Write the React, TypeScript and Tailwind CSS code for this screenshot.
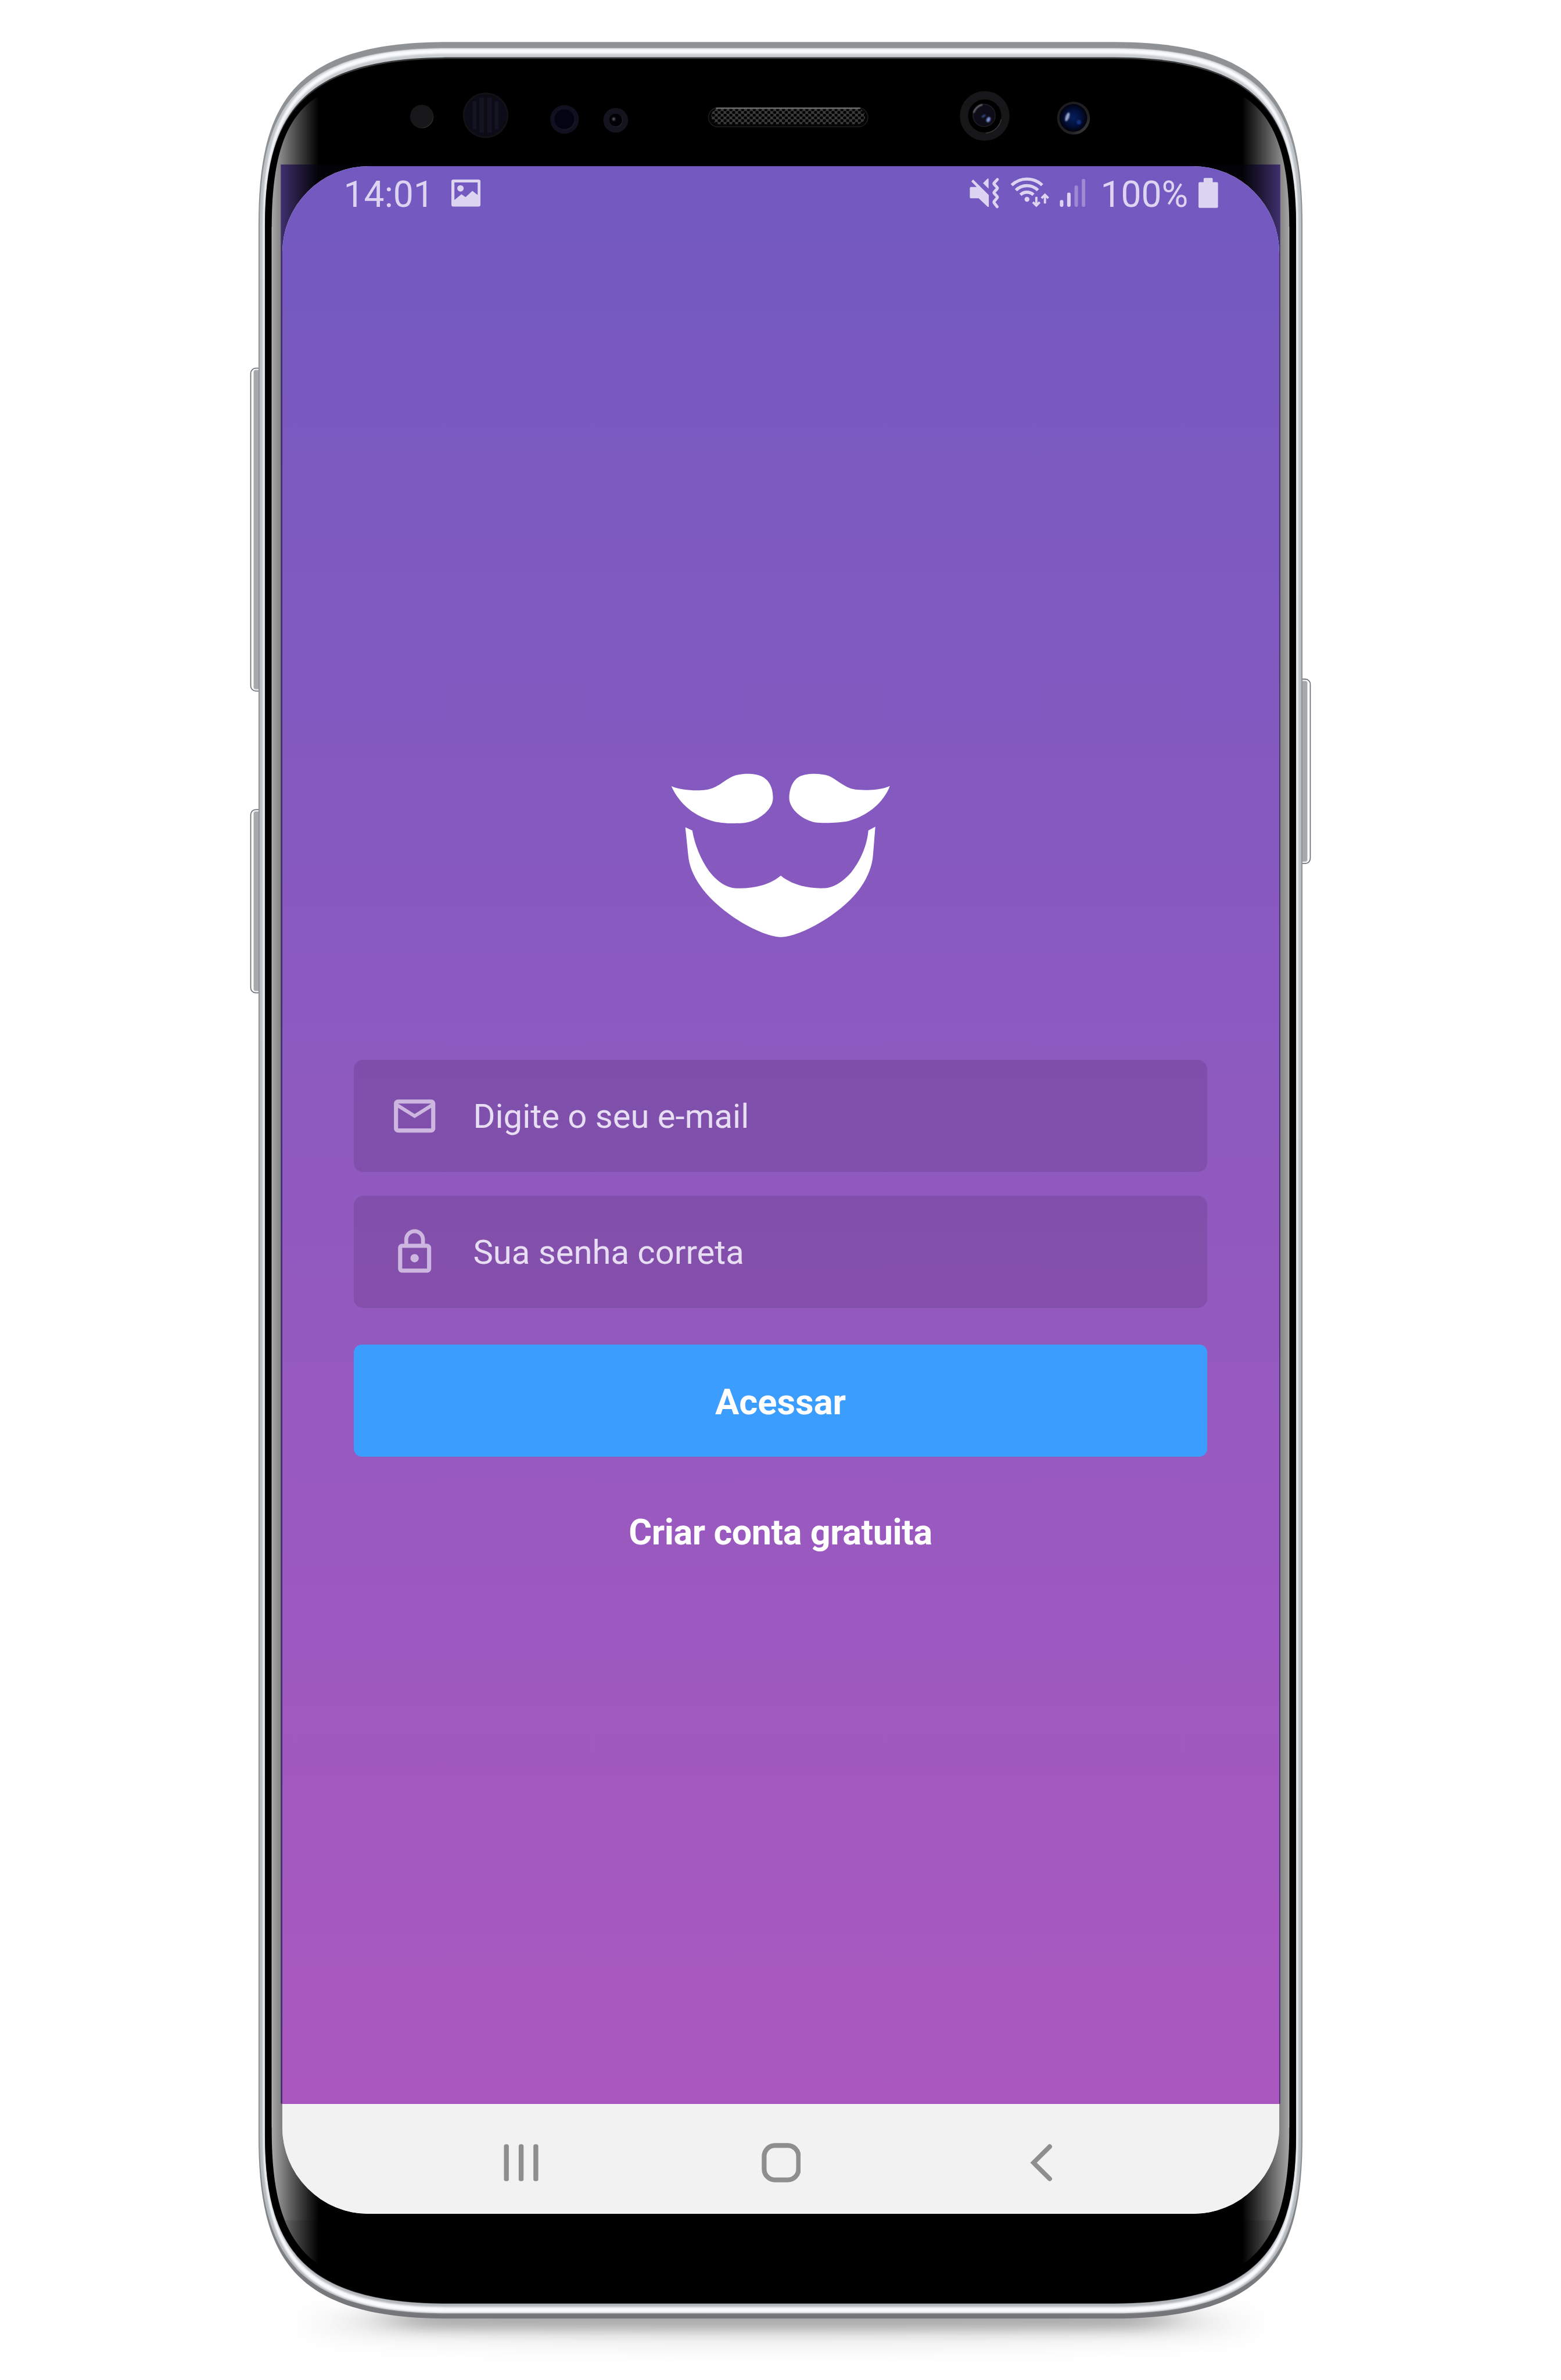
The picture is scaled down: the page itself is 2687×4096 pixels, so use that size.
import React from "react";

/** Rounded device outline; the handset is symmetric around x=1376. */
function outline(l: number, t: number, b: number, k1: number, k2: number) {
  const r = 2752 - l;
  const ex = 790;
  const rx = 2752 - ex;
  const sy = 397;
  const by = 3764;
  return [
    `M${l} ${sy}`,
    `C${l} ${t + k1} ${l + k2} ${t} ${ex} ${t}`,
    `H${rx}`,
    `C${r - k2} ${t} ${r} ${t + k1} ${r} ${sy}`,
    `V${by}`,
    `C${r} ${b - k1} ${r - k2} ${b} ${rx} ${b}`,
    `H${ex}`,
    `C${l + k2} ${b} ${l} ${b - k1} ${l} ${by}`,
    "Z",
  ].join(" ");
}

function SideKey({ y, h }: { y: number; h: number }) {
  return (
    <g>
      <rect x="442" y={y} width="30" height={h} rx="9" fill="#fff" stroke="#6f7173" strokeWidth="1.8" />
      <rect x="447" y={y + 3} width="20" height={h - 6} rx="4" fill="#a5a9ac" stroke="#d5d7d9" strokeWidth="1.2" />
    </g>
  );
}

function CurvedGlass() {
  return (
    <g>
      <path
        d="M479 403 C479 283 500 207 562 169 V3992 C500 3948 479 3872 479 3753 Z"
        fill="url(#glass)"
      />
      <path d="M480 3913.5 H562 V3992 C534 3972 515 3950 503 3913.5 Z" fill="#000" fillOpacity="0.1" />
      <rect x="479" y="400" width="1.5" height="3350" fill="#c4c4c4" fillOpacity="0.6" />
      <rect x="495" y="290" width="881" height="3418" fill="url(#tint)" />
    </g>
  );
}

function Handset() {
  return (
    <svg className="absolute inset-0 h-[4096px] w-[2687px]" viewBox="0 0 2752 4195" preserveAspectRatio="none" aria-hidden="true">
      <defs>
        <linearGradient id="glass" gradientUnits="userSpaceOnUse" x1="479" y1="0" x2="562" y2="0">
          <stop offset="0" stopColor="#a6a6a6" />
          <stop offset="0.2" stopColor="#848484" />
          <stop offset="0.45" stopColor="#575757" />
          <stop offset="0.75" stopColor="#272727" />
          <stop offset="1" stopColor="#000" />
        </linearGradient>
        <linearGradient id="tint" gradientUnits="userSpaceOnUse" x1="495" y1="0" x2="562" y2="0">
          <stop offset="0" stopColor="#40306e" />
          <stop offset="0.5" stopColor="#1f1838" />
          <stop offset="1" stopColor="#030208" />
        </linearGradient>
        <linearGradient id="rim" x1="0" y1="0" x2="0" y2="1">
          <stop offset="0" stopColor="#8e9295" />
          <stop offset="0.92" stopColor="#8e9295" />
          <stop offset="1" stopColor="#737578" />
        </linearGradient>
        <linearGradient id="steel" x1="0" y1="0" x2="0" y2="1">
          <stop offset="0" stopColor="#c9cdd1" />
          <stop offset="0.05" stopColor="#bcc1c6" />
          <stop offset="0.95" stopColor="#b6bbc0" />
          <stop offset="1" stopColor="#b3b7bc" />
        </linearGradient>
        <pattern id="mesh" width="10.3" height="9.6" patternUnits="userSpaceOnUse" x="1255" y="191">
          <rect width="10.3" height="9.6" fill="#3c3c3c" />
          <ellipse cx="2.6" cy="2.4" rx="3" ry="2.7" fill="#020202" />
          <ellipse cx="7.75" cy="7.2" rx="3" ry="2.7" fill="#020202" />
        </pattern>
        <radialGradient id="lens">
          <stop offset="0" stopColor="#06205c" />
          <stop offset="0.6" stopColor="#020f3a" />
          <stop offset="1" stopColor="#01020c" />
        </radialGradient>
        <linearGradient id="bezel" x1="0" y1="0" x2="1" y2="1">
          <stop offset="0" stopColor="#1b1b1c" />
          <stop offset="0.7" stopColor="#222224" />
          <stop offset="1" stopColor="#4a4a4c" />
        </linearGradient>
        <filter id="blurWide" x="-20%" y="-150%" width="140%" height="400%">
          <feGaussianBlur stdDeviation="34 22" />
        </filter>
        <filter id="blurTight" x="-20%" y="-150%" width="140%" height="400%">
          <feGaussianBlur stdDeviation="48 11" />
        </filter>
        <filter id="soft" x="-5%" y="-5%" width="110%" height="110%">
          <feGaussianBlur stdDeviation="1.4" />
        </filter>
        <filter id="glint" x="-100%" y="-100%" width="300%" height="300%">
          <feGaussianBlur stdDeviation="1.3" />
        </filter>
      </defs>

      <ellipse cx="1376" cy="4096" rx="830" ry="32" fill="#000" fillOpacity="0.11" filter="url(#blurWide)" />
      <rect x="690" y="4068" width="1372" height="38" rx="19" fill="#000" fillOpacity="0.27" filter="url(#blurTight)" />

      <SideKey y={649} h={569} />
      <SideKey y={1427} h={323} />
      <g transform="translate(2752 0) scale(-1 1)">
        <SideKey y={1197} h={325} />
      </g>

      <path d={outline(455.7, 74, 4086.7, 109, 60)} fill="url(#rim)" />
      <path d={outline(457.8, 85, 4077.5, 107, 60)} fill="url(#steel)" />
      <path d={outline(463.6, 86, 4076.5, 104, 62)} fill="#f8fafc" filter="url(#soft)" />
      <path d={outline(467, 94.5, 4066.5, 104, 62)} fill="url(#steel)" filter="url(#soft)" />
      <path d={outline(467, 101, 4060.5, 103, 63)} fill="#3a3b3c" />
      <path d={outline(467.2, 103.8, 4059.8, 103, 64)} fill="#000" />

      <CurvedGlass />
      <g transform="translate(2752 0) scale(-1 1)">
        <CurvedGlass />
      </g>

      <circle cx="743.7" cy="205.5" r="20.6" fill="url(#bezel)" />
      <circle cx="743.2" cy="205" r="20" fill="#171719" />

      <circle cx="856.2" cy="203.3" r="38.6" fill="#0c0b18" stroke="#121214" strokeWidth="3" />
      <g fill="#131322">
        <rect x="833" y="178" width="7" height="50" />
        <rect x="845" y="172" width="8" height="62" />
        <rect x="859" y="172" width="8" height="62" />
        <rect x="872" y="178" width="7" height="50" />
      </g>
      <g fill="#0c0c12">
        <rect x="841" y="170" width="3.5" height="66" />
        <rect x="854" y="167" width="4" height="72" />
        <rect x="868" y="170" width="3.5" height="66" />
      </g>

      <circle cx="995.3" cy="210.5" r="25.3" fill="#10101f" />
      <circle cx="995.8" cy="211.4" r="17.7" fill="#1d1d27" />
      <circle cx="995" cy="210.3" r="17.6" fill="#020414" />

      <circle cx="1085.5" cy="212" r="21.8" fill="#14141f" />
      <circle cx="1085.8" cy="211.9" r="12" fill="#24242e" />
      <circle cx="1085.3" cy="211.4" r="11.3" fill="#010106" />
      <ellipse cx="1082" cy="209.8" rx="2.6" ry="3" fill="#54545c" filter="url(#glint)" />

      <rect x="1249" y="190" width="281" height="33.5" rx="16.7" fill="#050505" stroke="#202020" strokeWidth="1.4" />
      <rect x="1254" y="191" width="271" height="28" rx="14" fill="url(#mesh)" />
      <rect x="1262" y="189.5" width="255" height="2.6" rx="1.3" fill="#6a6a6a" />

      <circle cx="1736" cy="204.3" r="36.5" fill="#000" stroke="#17171a" strokeWidth="14.5" />
      <path d="M1765 210 A30 30 0 0 1 1738 234.5" fill="none" stroke="#39393c" strokeWidth="1.6" />
      <circle cx="1735" cy="203.5" r="19.6" fill="#0d0c17" stroke="#1f1f24" strokeWidth="1.5" />
      <path d="M1716.5 199 A20 20 0 0 1 1732 184.5" fill="none" stroke="#77777c" strokeWidth="2.4" filter="url(#glint)" />
      <ellipse cx="1742.6" cy="210.8" rx="3.2" ry="4.8" transform="rotate(25 1742.6 210.8)" fill="#7a92da" filter="url(#glint)" />
      <ellipse cx="1734" cy="204.5" rx="4" ry="1.8" transform="rotate(-30 1734 204.5)" fill="#3c4a86" filter="url(#glint)" />

      <circle cx="1892.6" cy="208.2" r="29" fill="url(#bezel)" />
      <circle cx="1892.2" cy="207.8" r="24.4" fill="url(#lens)" />
      <ellipse cx="1881.8" cy="206" rx="3.2" ry="8.2" transform="rotate(20 1881.8 206)" fill="#9aa2c8" filter="url(#glint)" />
      <circle cx="1902" cy="215.4" r="4" fill="#12327e" filter="url(#glint)" />
    </svg>
  );
}

const statusIcon = "h-[56.6px] shrink-0 fill-[#dcd4f1]";

function StatusBar() {
  return (
    <div className="flex h-[92px] items-center justify-between pr-[104.5px] pl-[106px] text-[62.4px] leading-none text-[#dcd4f1]">
      <div className="flex items-center">
        <span className="w-[185px] pt-[6px]">14:01</span>
        <svg className={`${statusIcon} w-[50.1px]`} viewBox="1097 783 154 174">
          <path
            fillRule="evenodd"
            d="M1107 798 H1241 Q1251 798 1251 808 V931 Q1251 941 1241 941 H1107 Q1097 941 1097 931 V808 Q1097 798 1107 798 Z M1113 814 V907 L1150 876 L1172 891 L1208 858 L1236 880 V814 Z"
          />
          <circle cx="1145" cy="845" r="17" />
        </svg>
      </div>
      <div className="flex items-center">
        <svg className={`${statusIcon} w-[52.7px]`} viewBox="1710 311 54 58">
          <path d="M1712.5 329.3 H1722.5 L1713 319.5 L1716.3 316 L1743.9 343.5 V364.3 H1742 L1726 349.3 H1712.5 Q1710.4 349.3 1710.4 347 V331.5 Q1710.4 329.3 1712.5 329.3 Z" />
          <path d="M1733.7 322.5 L1741.5 314.7 H1743.5 V332.3 Z" />
          <path
            d="M1759 316 L1753 322.5 Q1752.5 323.5 1753.5 324.5 L1758.5 330 Q1759.5 331.3 1758.5 332.5 L1753.5 338 Q1752.5 339.3 1753.5 340.5 L1758.5 346 Q1759.5 347.3 1758.5 348.5 L1753.5 354.5 Q1752.5 356 1753.5 357.5 L1758.5 364"
            fill="none"
            stroke="#dcd4f1"
            strokeWidth="5.2"
            strokeLinecap="round"
          />
        </svg>
        <svg className={`${statusIcon} ml-[16.6px] w-[68.3px]`} viewBox="1781 311 70 58">
          <g fill="none" stroke="#dcd4f1" strokeWidth="5.6">
            <path d="M1783.5 326 A39 39 0 0 1 1837.3 326" />
            <path d="M1791 335 A27.5 27.5 0 0 1 1829.8 335" />
            <path d="M1799 343 A16.5 16.5 0 0 1 1821.8 343" />
            <path d="M1827 346.5 V361 M1821 356 L1827 362 L1833 356" strokeWidth="4" />
            <path d="M1842.2 358.5 V344 M1836.2 349 L1842.2 343 L1848.2 349" strokeWidth="4" />
          </g>
          <circle cx="1810.5" cy="351" r="4.3" />
        </svg>
        <svg className={`${statusIcon} ml-[16.6px] w-[44.9px]`} viewBox="1868 311 46 58">
          <rect x="1868.4" y="352.3" width="6.2" height="11.9" rx="2.4" />
          <rect x="1881.2" y="339.3" width="6.2" height="24.9" rx="2.4" />
          <rect x="1894.2" y="326.7" width="6.2" height="37.5" rx="2.4" fillOpacity="0.4" />
          <rect x="1907" y="315" width="6.2" height="49.2" rx="2.4" fillOpacity="0.4" />
        </svg>
        <span className="ml-[26px] w-[169px] pt-[6px]">100%</span>
        <svg className={`${statusIcon} w-[33.6px]`} viewBox="2113.6 311 34.4 58">
          <path d="M2115.6 320.7 H2122.6 V315 Q2122.6 313.3 2124.3 313.3 H2137 Q2138.7 313.3 2138.7 315 V320.7 H2146 Q2148 320.7 2148 322.7 V364 Q2148 366 2146 366 H2115.6 Q2113.6 366 2113.6 364 V322.7 Q2113.6 320.7 2115.6 320.7 Z" />
        </svg>
      </div>
    </div>
  );
}

function Logo() {
  return (
    <svg className="h-[289.7px] w-[384px] fill-white" viewBox="90 90 1180 890">
      <path d="M101 167 C150 190 240 193 284 186 C345 178 385 132 425 115 C470 97 540 98 576 114 C625 135 642 190 638 240 C630 300 555 350 500 359 C460 366 380 365 330 354 C230 330 145 265 101 167 Z" />
      <path d="M1257 166 C1205 190 1115 190 1070 184 C1015 174 975 130 935 113 C890 97 820 98 785 113 C740 132 722 190 725 240 C735 300 805 348 860 358 C900 364 985 362 1035 352 C1130 327 1220 262 1257 166 Z" />
      <path d="M175 384 L212 401 C225 480 260 560 300 615 C340 668 390 701 435 706 C530 712 620 690 680 640 C740 690 830 710 915 706 C965 702 1015 665 1050 625 C1100 565 1137 480 1143 401 L1180 381 L1168 530 C1163 600 1130 670 1085 725 C990 845 790 960 680 965 C570 960 370 842 270 715 C220 650 195 590 190 530 Z" />
    </svg>
  );
}

const icons = {
  mail: "M20 4H4c-1.1 0-2 .9-2 2v12c0 1.1.9 2 2 2h16c1.1 0 2-.9 2-2V6c0-1.1-.9-2-2-2zm0 14H4V8l8 5 8-5v10zm-8-7L4 6h16l-8 5z",
  lock: "M12 17c1.1 0 2-.9 2-2s-.9-2-2-2-2 .9-2 2 .9 2 2 2zm6-9h-1V6c0-2.76-2.24-5-5-5S7 3.24 7 6v2H6c-1.1 0-2 .9-2 2v10c0 1.1.9 2 2 2h12c1.1 0 2-.9 2-2V10c0-1.1-.9-2-2-2zM8.9 6c0-1.71 1.39-3.1 3.1-3.1s3.1 1.39 3.1 3.1v2H8.9V6zM18 20H6V10h12v10z",
};

function Field({ icon, label }: { icon: keyof typeof icons; label: string }) {
  return (
    <div className="flex h-[193px] items-center rounded-[16px] bg-black/10 pl-[62px]">
      <svg className="h-[85.4px] w-[85.4px] fill-[#cdb7e0]" viewBox="0 0 24 24">
        <path d={icons[icon]} />
      </svg>
      <span className="pl-[58px] text-[58px] leading-none text-[#e8def4]">{label}</span>
    </div>
  );
}

function NavBar() {
  return (
    <div className="flex h-[189px] shrink-0 items-center justify-center gap-[381px] border-t-2 border-[#f8f6f9] bg-[#f2f2f2] pt-[10px]">
      <svg className="h-[68px] w-[64px] fill-[#8e8e8e]" viewBox="0 0 65.5 69.6">
        <rect x="2.5" y="2.3" width="8.6" height="65" rx="3.6" />
        <rect x="28.5" y="2.3" width="8.6" height="65" rx="3.6" />
        <rect x="54.4" y="2.3" width="8.6" height="65" rx="3.6" />
      </svg>
      <svg className="h-[68px] w-[68px]" viewBox="-1 0 69.6 69.6">
        <rect x="4.5" y="4.5" width="60.6" height="60.6" rx="19" fill="none" stroke="#8e8e8e" strokeWidth="8.4" />
      </svg>
      <svg className="h-[68px] w-[64px]" viewBox="0 0 65.5 69.6">
        <path d="M49 6.5 L20.5 34.8 L49 63.2" fill="none" stroke="#8e8e8e" strokeWidth="8.2" strokeLinecap="round" />
      </svg>
    </div>
  );
}

export default function App() {
  return (
    <main className="relative flex h-[4096px] w-[2687px] justify-center overflow-hidden bg-white pt-[286px] font-[Roboto,sans-serif]">
      <Handset />
      <section className="relative flex h-[3524px] w-[1716px] flex-col overflow-hidden rounded-[149px] bg-[#f2f2f2]">
        <div className="flex grow flex-col bg-linear-to-b from-[#7259c0] to-[#aa58bf]">
          <StatusBar />
          <div className="flex flex-col items-center pt-[950px]">
            <Logo />
            <form className="mt-[206.5px] flex w-[1469px] flex-col">
              <div className="flex flex-col gap-[41.3px]">
                <Field icon="mail" label="Digite o seu e-mail" />
                <Field icon="lock" label="Sua senha correta" />
              </div>
              <button
                type="button"
                className="mt-[62.5px] flex h-[193px] items-center justify-center rounded-[14px] bg-[#3b9eff] pt-[6px] text-[61.5px] leading-none font-bold text-white"
              >
                Acessar
              </button>
            </form>
            <a className="mt-[100px] text-[61px] leading-none font-bold tracking-[-0.4px] text-white">Criar conta gratuita</a>
          </div>
        </div>
        <NavBar />
      </section>
    </main>
  );
}
